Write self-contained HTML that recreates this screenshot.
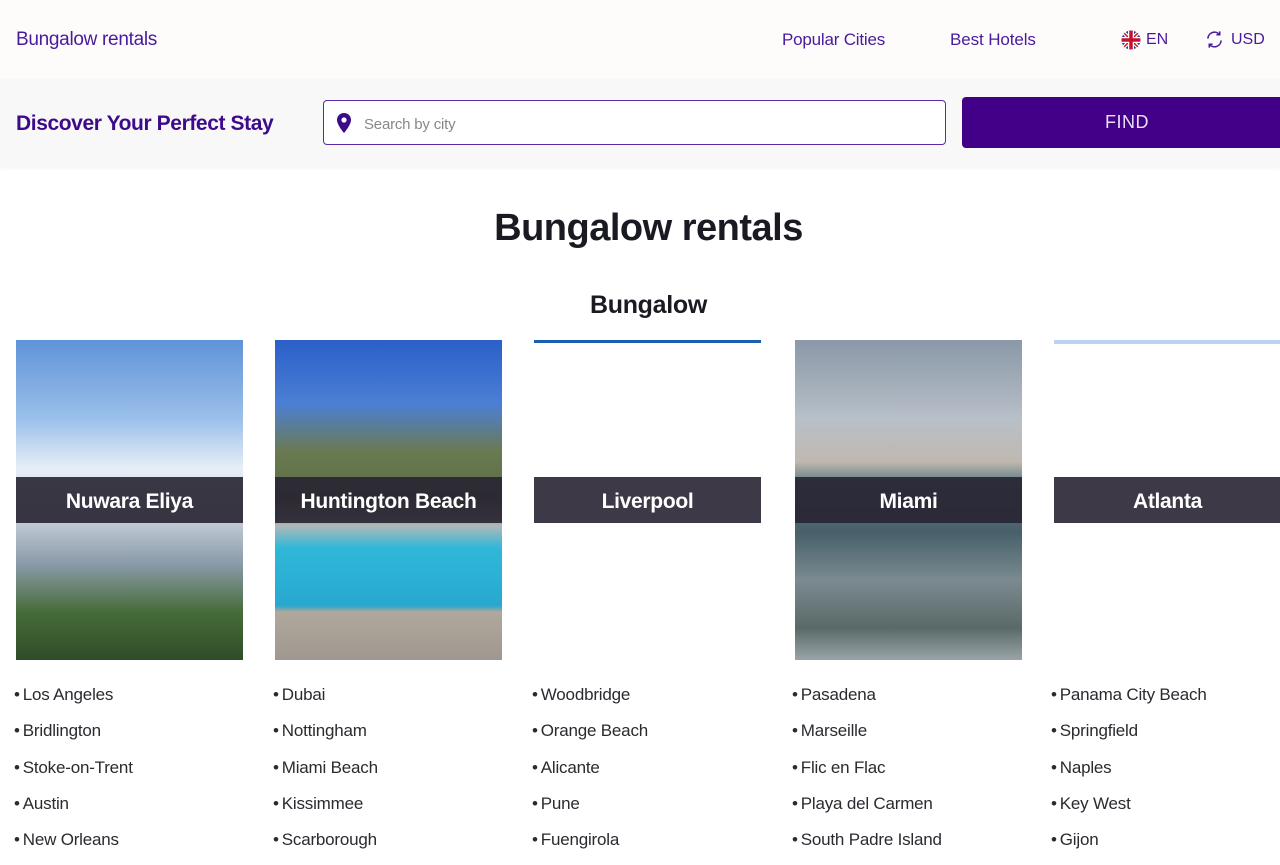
<!DOCTYPE html>
<html><head><meta charset="utf-8"><style>
*{margin:0;padding:0;box-sizing:border-box}
body{width:1280px;height:853px;overflow:hidden;background:#fff;font-family:"Liberation Sans",sans-serif;position:relative}
.hdr{position:absolute;left:0;top:0;width:1280px;height:79px;background:#fdfcfb}
.a{position:absolute;color:#4a1a9c;font-size:18px}
.band{position:absolute;left:0;top:79px;width:1280px;height:87px;background:#f8f8f9;box-shadow:0 2px 4px rgba(0,0,0,.05)}
.inp{position:absolute;left:323px;top:100px;width:623px;height:45px;border:1.5px solid #5a2aa8;border-radius:4px;background:#fff}
.btn{position:absolute;left:962px;top:97px;width:330px;height:51px;background:#420088;border-radius:4px;color:#e8e0f4;font-size:18px;text-align:center;line-height:51px;letter-spacing:.5px}
h1{position:absolute;left:0;width:1297px;top:207px;text-align:center;font-size:38px;color:#1a1a22;letter-spacing:-.5px}
h2{position:absolute;left:0;width:1297px;top:291px;text-align:center;font-size:25px;color:#1a1a22;letter-spacing:-.3px}
.card{position:absolute;top:340px;width:227px;height:320px}
.lab{position:absolute;left:0;top:137px;width:100%;height:46px;background:rgba(40,36,50,.9);color:#fff;font-size:21px;font-weight:bold;text-align:center;line-height:49px;letter-spacing:-.3px}
ul{position:absolute;top:684px;list-style:none;font-size:17px;color:#2a2a30;letter-spacing:-.2px}
li{height:36.3px;line-height:22px}
li:before{content:"•";margin-right:3px}
</style></head><body>
<div class="hdr"></div>
<div class="a" style="left:16px;top:29px;font-size:19px;letter-spacing:-.3px">Bungalow rentals</div>
<div class="a" style="left:782px;top:30px;font-size:17px;letter-spacing:-.2px">Popular Cities</div>
<div class="a" style="left:950px;top:30px;font-size:17px;letter-spacing:-.1px">Best Hotels</div>
<svg style="position:absolute;left:1121px;top:30px" width="20" height="20" viewBox="0 0 20 20"><clipPath id="c"><circle cx="10" cy="10" r="9.5"/></clipPath><g clip-path="url(#c)"><rect width="20" height="20" fill="#1e3a8a"/><path d="M0 0L20 20M20 0L0 20" stroke="#fff" stroke-width="4"/><path d="M0 0L20 20M20 0L0 20" stroke="#c8102e" stroke-width="1.5"/><path d="M10 0V20M0 10H20" stroke="#fff" stroke-width="6"/><path d="M10 0V20M0 10H20" stroke="#c8102e" stroke-width="3.5"/></g></svg>
<div class="a" style="left:1146px;top:31px;font-size:16px">EN</div>
<svg style="position:absolute;left:1205px;top:30px" width="19" height="19" viewBox="0 0 20 20" fill="none" stroke="#4a1a9c" stroke-width="1.6"><path d="M3 9a7 7 0 0 1 12.5-4M17 11a7 7 0 0 1-12.5 4"/><path d="M15.5 1.5v3.5h-3.5M4.5 18.5V15H8"/></svg>
<div class="a" style="left:1231px;top:31px;font-size:16px">USD</div>
<div class="band"></div>
<div class="a" style="left:16px;top:112px;font-size:21px;font-weight:bold;color:#3d0a8a;letter-spacing:-.4px">Discover Your Perfect Stay</div>
<div class="inp"></div>
<svg style="position:absolute;left:336px;top:112px" width="16" height="22" viewBox="0 0 16 22"><path d="M8 1a7 7 0 0 0-7 7c0 5 7 13 7 13s7-8 7-13a7 7 0 0 0-7-7z" fill="#3d0a8a"/><circle cx="8" cy="8" r="2.6" fill="#fff"/></svg>
<div style="position:absolute;left:364px;top:116px;font-size:15px;color:#888;letter-spacing:-.2px">Search by city</div>
<div class="btn">FIND</div>
<h1>Bungalow rentals</h1>
<h2>Bungalow</h2>
<div class="card" style="left:16px;background:linear-gradient(#5f93d8 0%,#9cc0ea 25%,#e6eef7 40%,#c8d2dc 55%,#8a9aa8 70%,#466c3a 85%,#2f4d28 100%)"><div class="lab">Nuwara Eliya</div></div>
<div class="card" style="left:275px;background:linear-gradient(#2a5fc8 0%,#4c7fd4 20%,#6a7a50 35%,#5a6a44 50%,#b0b8b8 58%,#30b8d8 65%,#28a8d0 83%,#b0a89c 85%,#a09890 100%)"><div class="lab">Huntington Beach</div></div>
<div class="card" style="left:534px;background:#fff;border-top:3px solid #1a5fb0"><div class="lab" style="top:134px">Liverpool</div></div>
<div class="card" style="left:795px;background:linear-gradient(#8a98a8 0%,#b8c0c8 25%,#c0b8b0 38%,#5a7880 45%,#48606a 60%,#7a8a90 75%,#5a6a68 90%,#9aa4a8 100%)"><div class="lab">Miami</div></div>
<div class="card" style="left:1054px;width:227px;background:#fff;border-top:4px solid #b8d4f0"><div class="lab" style="top:133px">Atlanta</div></div>
<ul style="left:14px"><li>Los Angeles</li><li>Bridlington</li><li>Stoke-on-Trent</li><li>Austin</li><li>New Orleans</li></ul>
<ul style="left:273px"><li>Dubai</li><li>Nottingham</li><li>Miami Beach</li><li>Kissimmee</li><li>Scarborough</li></ul>
<ul style="left:532px"><li>Woodbridge</li><li>Orange Beach</li><li>Alicante</li><li>Pune</li><li>Fuengirola</li></ul>
<ul style="left:792px"><li>Pasadena</li><li>Marseille</li><li>Flic en Flac</li><li>Playa del Carmen</li><li>South Padre Island</li></ul>
<ul style="left:1051px"><li>Panama City Beach</li><li>Springfield</li><li>Naples</li><li>Key West</li><li>Gijon</li></ul>
</body></html>
